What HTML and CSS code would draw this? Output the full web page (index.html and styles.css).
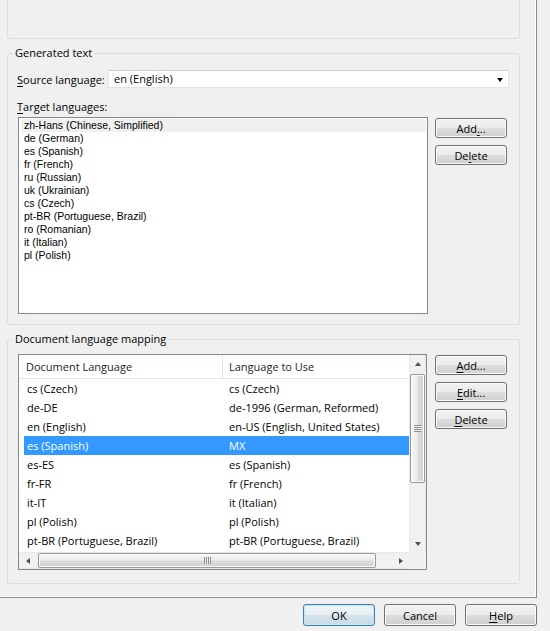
FILE: index.html
```html
<!DOCTYPE html>
<html>
<head>
<meta charset="utf-8">
<title>Language options</title>
<link rel="stylesheet" href="styles.css">
</head>
<body>
<div class="dialog">
  <div class="tabpage">
    <div class="group group-top"></div>

    <fieldset class="group">
      <legend>Generated text</legend>
      <div class="gen-body">
        <div class="source-row">
          <label class="source-lbl"><u>S</u>ource language:</label>
          <div class="combo">
            <span class="combo-text">en (English)</span>
            <span class="combo-arrow"></span>
          </div>
        </div>
        <div class="target-lbl"><u>T</u>arget languages:</div>
        <div class="list-row">
          <div class="listbox">
            <div class="lb-item lb-sel">zh-Hans (Chinese, Simplified)</div>
            <div class="lb-item">de (German)</div>
            <div class="lb-item">es (Spanish)</div>
            <div class="lb-item">fr (French)</div>
            <div class="lb-item">ru (Russian)</div>
            <div class="lb-item">uk (Ukrainian)</div>
            <div class="lb-item">cs (Czech)</div>
            <div class="lb-item">pt-BR (Portuguese, Brazil)</div>
            <div class="lb-item">ro (Romanian)</div>
            <div class="lb-item">it (Italian)</div>
            <div class="lb-item">pl (Polish)</div>
          </div>
          <div class="btn-col">
            <button class="btn">Add<u>.</u>..</button>
            <button class="btn">De<u>l</u>ete</button>
          </div>
        </div>
      </div>
    </fieldset>

    <fieldset class="group group-map">
      <legend>Document language mapping</legend>
      <div class="map-body">
        <div class="listview">
          <div class="lv-content">
            <div class="lv-header">
              <div class="lv-h1">Document Language</div>
              <div class="lv-h2">Language to Use</div>
            </div>
            <div class="lv-row"><div class="lv-c1">cs (Czech)</div><div class="lv-c2">cs (Czech)</div></div>
            <div class="lv-row"><div class="lv-c1">de-DE</div><div class="lv-c2">de-1996 (German, Reformed)</div></div>
            <div class="lv-row"><div class="lv-c1">en (English)</div><div class="lv-c2">en-US (English, United States)</div></div>
            <div class="lv-row lv-sel"><div class="lv-c1">es (Spanish)</div><div class="lv-c2">MX</div></div>
            <div class="lv-row"><div class="lv-c1">es-ES</div><div class="lv-c2">es (Spanish)</div></div>
            <div class="lv-row"><div class="lv-c1">fr-FR</div><div class="lv-c2">fr (French)</div></div>
            <div class="lv-row"><div class="lv-c1">it-IT</div><div class="lv-c2">it (Italian)</div></div>
            <div class="lv-row"><div class="lv-c1">pl (Polish)</div><div class="lv-c2">pl (Polish)</div></div>
            <div class="lv-row"><div class="lv-c1">pt-BR (Portuguese, Brazil)</div><div class="lv-c2">pt-BR (Portuguese, Brazil)</div></div>
          </div>
          <div class="vscroll">
            <div class="sb-btn"><span class="tri tri-up"></span></div>
            <div class="vtrack">
              <div class="vthumb"><span class="vgrip"></span></div>
            </div>
            <div class="sb-btn"><span class="tri tri-down"></span></div>
          </div>
          <div class="hscroll">
            <div class="sb-btn"><span class="tri tri-left"></span></div>
            <div class="htrack">
              <div class="hthumb"><span class="hgrip"></span></div>
            </div>
            <div class="sb-btn"><span class="tri tri-right"></span></div>
          </div>
          <div class="sb-corner"></div>
        </div>
        <div class="btn-col">
          <button class="btn"><u>A</u>dd...</button>
          <button class="btn"><u>E</u>dit...</button>
          <button class="btn"><u>D</u>elete</button>
        </div>
      </div>
    </fieldset>
  </div>

  <div class="footer">
    <button class="btn btn-foot btn-default">OK</button>
    <button class="btn btn-foot">Cancel</button>
    <button class="btn btn-foot"><u>H</u>elp</button>
  </div>
</div>
</body>
</html>
```

FILE: styles.css
```css
* { box-sizing: border-box; }

html, body {
  margin: 0;
  padding: 0;
}

body {
  width: 550px;
  height: 631px;
  overflow: hidden;
  background: #f0f0f0;
  font-family: "Open Sans", "Noto Sans", sans-serif;
  font-size: 11px;
  color: #000;
}

u { text-decoration-thickness: 1px; text-underline-offset: 2px; }

.dialog {
  display: flex;
  flex-direction: column;
}

.tabpage {
  width: 537px;
  height: 598px;
  padding-left: 7px;
  border-right: 1px solid #898c95;
  border-bottom: 1px solid #898c95;
  box-shadow: inset -1px -1px 0 #ffffff;
  display: flex;
  flex-direction: column;
}

.group {
  width: 513px;
  border: 1px solid #d5dfe5;
  border-radius: 3px;
}

.group-top {
  height: 39px;
  border-top: none;
  border-radius: 0 0 3px 3px;
  flex: none;
}

fieldset.group {
  margin: 7px 0 0 0;
  padding: 0;
  min-width: 0;
}

legend {
  margin-left: 5px;
  padding: 0 2px;
  height: 15px;
  line-height: 14px;
}

/* ---------- Generated text ---------- */
.gen-body {
  padding: 9px 10px 10px 10px;
}

.source-row {
  display: flex;
  align-items: center;
  height: 18px;
}

.source-lbl {
  width: 91px;
  margin-left: -1px;
  line-height: 15px;
}

.combo {
  flex: 1;
  height: 18px;
  display: flex;
  align-items: center;
  justify-content: space-between;
  background: #fff;
  border: 1px solid #e2e3ea;
  border-top-color: #cfd2d8;
  padding: 0 5px 0 5px;
}

.combo-text { line-height: 16px; }

.combo-arrow {
  width: 0;
  height: 0;
  border-left: 3.5px solid transparent;
  border-right: 3.5px solid transparent;
  border-top: 4px solid #000;
  margin-top: 1px;
}

.target-lbl {
  margin-top: 11px;
  margin-left: -1px;
  line-height: 15px;
}

.list-row {
  display: flex;
  gap: 7px;
  margin-top: 3px;
}

.listbox {
  width: 410px;
  height: 197px;
  background: #fff;
  border: 1px solid #828790;
  padding: 1px 1px 0 1px;
  font-family: "Liberation Sans", Arial, sans-serif;
  font-size: 10.5px;
}

.lb-item {
  height: 13px;
  line-height: 13px;
  padding-left: 3px;
  margin-left: 1px;
  white-space: nowrap;
}

.lb-sel { background: #f0f0f0; }

.btn-col {
  width: 72px;
  margin-top: 1px;
  display: flex;
  flex-direction: column;
  gap: 7px;
}

.btn {
  height: 20px;
  width: 72px;
  padding: 0;
  font-family: "Open Sans", "Noto Sans", sans-serif;
  font-size: 11px;
  color: #000;
  border: 1px solid #707070;
  border-radius: 3px;
  background: linear-gradient(#f2f2f2 0%, #ebebeb 50%, #dddddd 50%, #cfcfcf 100%);
  box-shadow: inset 0 0 0 1px #fbfbfb;
  line-height: 17px;
  text-align: center;
}

/* ---------- Document language mapping ---------- */
.map-body {
  display: flex;
  gap: 8px;
  padding: 7px 10px 13px 10px;
}

.listview {
  width: 409px;
  height: 216px;
  background: #fff;
  border: 1px solid #828790;
  display: grid;
  grid-template-columns: 390px 17px;
  grid-template-rows: 197px 17px;
}

.lv-content {
  overflow: hidden;
}

.lv-header {
  display: flex;
  height: 24px;
  border-bottom: 1px solid #e5e5e5;
  line-height: 23px;
  color: #1e1e1e;
}

.lv-h1 {
  width: 204px;
  padding-left: 7px;
  border-right: 1px solid #e5e5e5;
}

.lv-h2 { padding-left: 6px; }

.lv-row {
  display: flex;
  height: 19px;
  line-height: 19px;
  margin-left: 5px;
  white-space: nowrap;
}

.lv-c1 { width: 198px; padding-left: 3px; }
.lv-c2 { padding-left: 7px; }

.lv-sel {
  background: #3399ff;
  color: #fff;
}

/* scrollbars */
.vscroll {
  display: flex;
  flex-direction: column;
  background: linear-gradient(to right, #e7e7e7 0, #f1f1f1 2px, #f1f1f1 15px, #e7e7e7 17px);
}

.hscroll {
  display: flex;
  background: linear-gradient(to bottom, #e7e7e7 0, #f1f1f1 2px, #f1f1f1 15px, #e7e7e7 17px);
}

.sb-corner { background: #f0f0f0; }

.sb-btn {
  width: 17px;
  height: 17px;
  flex: none;
  display: flex;
  align-items: center;
  justify-content: center;
}

.tri { width: 0; height: 0; }
.tri-up {
  border-left: 3.5px solid transparent;
  border-right: 3.5px solid transparent;
  border-bottom: 4px solid #505050;
}
.tri-down {
  border-left: 3.5px solid transparent;
  border-right: 3.5px solid transparent;
  border-top: 4px solid #505050;
}
.tri-left {
  border-top: 3.5px solid transparent;
  border-bottom: 3.5px solid transparent;
  border-right: 4px solid #505050;
}
.tri-right {
  border-top: 3.5px solid transparent;
  border-bottom: 3.5px solid transparent;
  border-left: 4px solid #505050;
}

.vtrack { flex: 1; }
.htrack { flex: 1; display: flex; }

.vthumb {
  width: 15px;
  height: 109px;
  margin: 2px 0 0 1px;
  border: 1px solid #979797;
  border-radius: 2px;
  background: linear-gradient(to right, #f7f7f7 0%, #ececec 45%, #dcdcdc 55%, #d0d0d0 100%);
  box-shadow: inset 0 0 0 1px #fcfcfc;
  display: flex;
  align-items: center;
  justify-content: center;
}

.vgrip {
  width: 7px;
  height: 7px;
  background: repeating-linear-gradient(to bottom, #8a8a8a 0, #8a8a8a 1px, #f4f4f4 1px, #f4f4f4 2px);
}

.hthumb {
  width: 338px;
  height: 15px;
  margin: 1px 0 0 2px;
  border: 1px solid #979797;
  border-radius: 2px;
  background: linear-gradient(to bottom, #f7f7f7 0%, #ececec 45%, #dcdcdc 55%, #d0d0d0 100%);
  box-shadow: inset 0 0 0 1px #fcfcfc;
  display: flex;
  align-items: center;
  justify-content: center;
}

.hgrip {
  width: 7px;
  height: 7px;
  background: repeating-linear-gradient(to right, #8a8a8a 0, #8a8a8a 1px, #f4f4f4 1px, #f4f4f4 2px);
}

/* ---------- footer ---------- */
.footer {
  width: 537px;
  margin-top: 6px;
  display: flex;
  justify-content: flex-end;
  gap: 9px;
}

.btn-foot { height: 22px; line-height: 19px; }

.btn-default {
  border-color: #3c7fb1;
  box-shadow: inset 0 0 0 1px #c4e8fa;
  background: linear-gradient(#f0f6f9 0%, #e6eff4 50%, #d6e4ec 50%, #c9dbe6 100%);
}
```
